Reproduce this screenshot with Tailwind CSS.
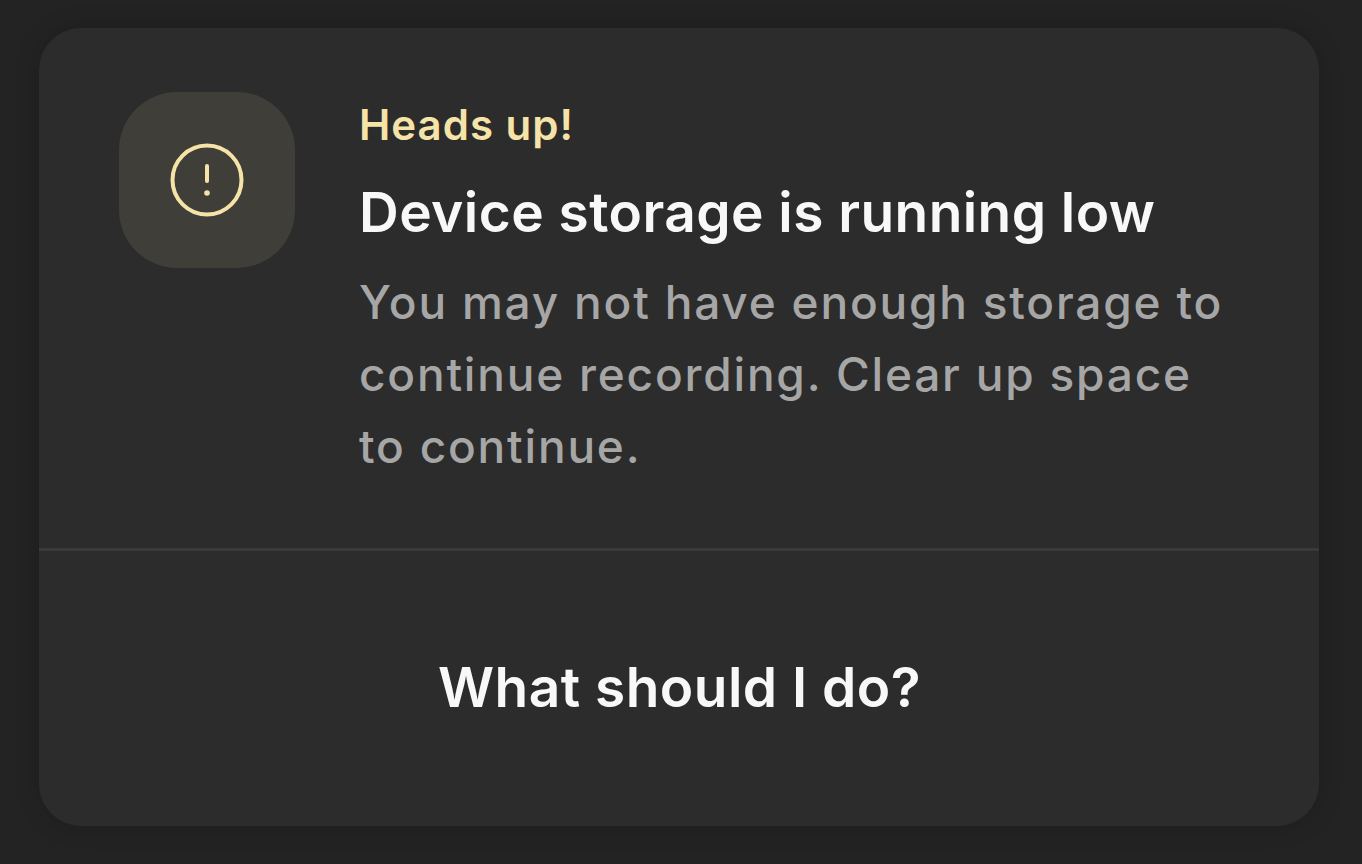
<!DOCTYPE html>
<html lang="en">
<head>
  <meta charset="UTF-8">
  <title>Storage alert</title>
  <script src="https://cdn.jsdelivr.net/npm/@tailwindcss/browser@4"></script>
</head>
<body class="bg-[#232323] h-[864px] overflow-hidden font-['Inter',sans-serif]">
  <div class="pt-[28px] px-[39px]">
    <div class="w-[1280px] h-[798px] bg-[#2c2c2c] rounded-[42px] shadow-[0_0_24px_rgba(0,0,0,0.18)] flex flex-col">
      <!-- message -->
      <div class="h-[520px] flex pl-[80px] pt-[64px] gap-[64px]">
        <div class="w-[176px] h-[176px] rounded-[58px] bg-[#3f3e38] flex items-center justify-center shrink-0">
          <svg class="w-[80px] h-[80px] text-[#f5e3a8]" viewBox="0 0 80 80" fill="none" stroke="currentColor" stroke-width="4" stroke-linecap="round">
            <circle cx="40" cy="40" r="34.5"/>
            <path d="M40 26v15"/>
            <circle cx="40" cy="53" r="2.8" fill="currentColor" stroke="none"/>
          </svg>
        </div>
        <div class="w-[880px]">
          <p class="text-[42px] leading-[66px] font-semibold tracking-[1px] text-[#f5e3a8]">Heads up!</p>
          <h2 class="text-[55px] leading-[72px] font-semibold tracking-[0.45px] text-[#f8f8f8] mt-[18px]">Device storage is running low</h2>
          <p class="text-[46px] leading-[72px] font-medium tracking-[1.8px] text-[#a6a6a6] mt-[18px]">You may not have enough storage to<br>continue recording. Clear up space<br>to continue.</p>
        </div>
      </div>
      <div class="h-[3px] bg-[#3a3a3a]"></div>
      <!-- action -->
      <div class="flex-1 flex items-center pl-[399px] pb-[3px]">
        <button class="text-[55px] leading-[72px] font-semibold tracking-[0.47px] text-[#f8f8f8]">What should I do?</button>
      </div>
    </div>
  </div>
</body>
</html>
